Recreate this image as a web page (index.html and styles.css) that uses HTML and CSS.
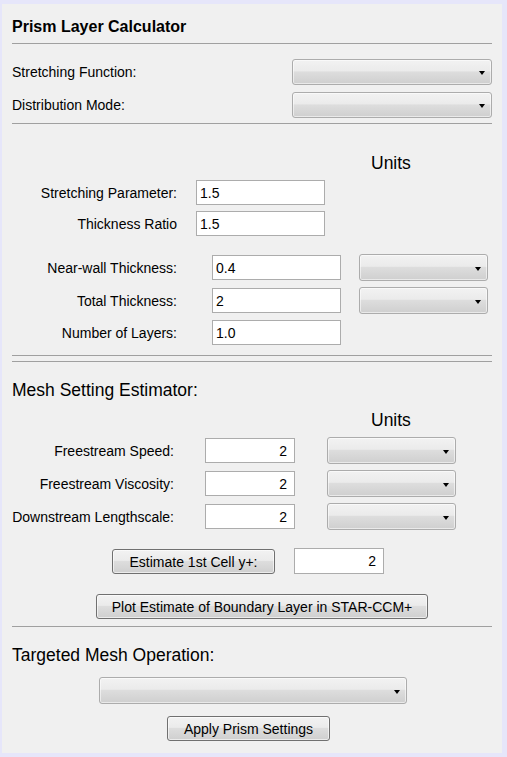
FILE: index.html
```html
<!DOCTYPE html>
<html>
<head>
<meta charset="utf-8">
<link rel="stylesheet" href="styles.css">
</head>
<body>
<div class="panel">
  <div class="title">Prism Layer Calculator</div>
  <div class="rule r-title"></div>

  <div class="row row-top first">
    <span class="label">Stretching Function:</span>
    <div class="combo w200"><span class="arrow"></span></div>
  </div>
  <div class="row row-top second">
    <span class="label">Distribution Mode:</span>
    <div class="combo w200"><span class="arrow"></span></div>
  </div>
  <div class="rule r-dist"></div>

  <div class="units units-a">Units</div>
  <div class="row ra first-a">
    <span class="label lbl165">Stretching Parameter:</span>
    <input class="field w129 ml19" type="text" value="1.5">
  </div>
  <div class="row ra gap6">
    <span class="label lbl165">Thickness Ratio</span>
    <input class="field w129 ml19" type="text" value="1.5">
  </div>

  <div class="row ra group2">
    <span class="label lbl165">Near-wall Thickness:</span>
    <input class="field w129 ml35" type="text" value="0.4">
    <div class="combo w129 ml18"><span class="arrow"></span></div>
  </div>
  <div class="row ra gap6">
    <span class="label lbl165">Total Thickness:</span>
    <input class="field w129 ml35" type="text" value="2">
    <div class="combo w129 ml18"><span class="arrow"></span></div>
  </div>
  <div class="row ra gap6">
    <span class="label lbl165">Number of Layers:</span>
    <input class="field w129 ml35" type="text" value="1.0">
  </div>

  <div class="rule r-dbl1"></div>
  <div class="rule r-dbl2"></div>

  <div class="heading h-mesh">Mesh Setting Estimator:</div>
  <div class="units units-b">Units</div>

  <div class="row ra mesh-first">
    <span class="label lbl162">Freestream Speed:</span>
    <input class="field num w90 ml31" type="text" value="2">
    <div class="combo w129 ml32"><span class="arrow"></span></div>
  </div>
  <div class="row ra gap6">
    <span class="label lbl162">Freestream Viscosity:</span>
    <input class="field num w90 ml31" type="text" value="2">
    <div class="combo w129 ml32"><span class="arrow"></span></div>
  </div>
  <div class="row ra gap6">
    <span class="label lbl162">Downstream Lengthscale:</span>
    <input class="field num w90 ml31" type="text" value="2">
    <div class="combo w129 ml32"><span class="arrow"></span></div>
  </div>

  <div class="row rb est-row">
    <button class="btn w163 ml100" type="button">Estimate 1st Cell y+:</button>
    <input class="field num tall w90 ml19" type="text" value="2">
  </div>
  <div class="row plot-row">
    <button class="btn w332 ml84" type="button">Plot Estimate of Boundary Layer in STAR-CCM+</button>
  </div>
  <div class="rule r-plot"></div>

  <div class="heading h-target">Targeted Mesh Operation:</div>
  <div class="row target-row">
    <div class="combo w308 ml87"><span class="arrow"></span></div>
  </div>
  <div class="row apply-row">
    <button class="btn w163 ml155" type="button">Apply Prism Settings</button>
  </div>
</div>
</body>
</html>
```

FILE: styles.css
```css
* { box-sizing: border-box; }

html, body {
  margin: 0;
  padding: 0;
  background: #e6e6fa;
}

body {
  width: 507px;
  height: 757px;
  overflow: hidden;
  padding-top: 4px;
  padding-left: 2px;
  font-family: "Liberation Sans", Arial, sans-serif;
  color: #000;
}

.panel {
  width: 500px;
  height: 749px;
  background: #f0f0f0;
  padding: 14px 10px 0 10px;
}

.title {
  font-weight: bold;
  font-size: 16px;
  line-height: 18px;
  height: 18px;
}

.rule {
  height: 1px;
  background: #a0a0a0;
  width: 480px;
}
.r-title { margin-top: 7px; }
.r-dist { margin-top: 5px; }
.r-dbl1 { margin-top: 10px; }
.r-dbl2 { margin-top: 5px; }
.r-plot { margin-top: 7px; }

.row {
  display: flex;
  align-items: center;
}
.row-top { justify-content: space-between; height: 26px; }
.first { margin-top: 15px; }
.second { margin-top: 7px; }
.ra { }
.rb { align-items: flex-end; }

.label {
  font-size: 14px;
  line-height: 16px;
  white-space: nowrap;
}
.lbl165 { width: 165px; text-align: right; }
.lbl162 { width: 162px; text-align: right; }

.units {
  font-size: 17.5px;
  line-height: 20px;
  height: 20px;
  padding-left: 359px;
}
.units-a { margin-top: 29px; }
.units-b { margin-top: 10px; }

.heading {
  font-size: 17.5px;
  line-height: 20px;
  height: 20px;
  white-space: nowrap;
}
.h-mesh { margin-top: 18px; }
.h-target { margin-top: 18px; }

.first-a { margin-top: 7px; }
.gap6 { margin-top: 6px; }
.group2 { margin-top: 18px; }
.mesh-first { margin-top: 7px; }
.est-row { margin-top: 18px; }
.plot-row { margin-top: 20px; }
.target-row { margin-top: 12px; }
.apply-row { margin-top: 12px; }

.field {
  height: 25px;
  border: 1px solid #acacac;
  background: #fff;
  font-family: "Liberation Sans", Arial, sans-serif;
  font-size: 14px;
  color: #000;
  padding: 0 3px 0 3px;
  margin-top: 0;
  margin-bottom: 0;
  outline: none;
}
.field.num { text-align: right; padding-right: 7px; }
.field.tall { height: 26px; }

.combo {
  position: relative;
  height: 27px;
  border: 1px solid #acacac;
  border-radius: 3px;
  background: linear-gradient(to bottom, #f2f2f2 0%, #ebebeb 45%, #dddddd 50%, #cfcfcf 100%);
  box-shadow: inset 0 0 0 1px rgba(255,255,255,0.55);
}
.row-top .combo { height: 26px; }
.arrow {
  position: absolute;
  right: 6px;
  top: 50%;
  margin-top: -1px;
  width: 0;
  height: 0;
  border-left: 3.5px solid transparent;
  border-right: 3.5px solid transparent;
  border-top: 4px solid #000;
}

.btn {
  height: 25px;
  border: 1px solid #707070;
  border-radius: 3px;
  background: linear-gradient(to bottom, #f2f2f2 0%, #ebebeb 45%, #dddddd 50%, #cfcfcf 100%);
  box-shadow: inset 0 0 0 1px rgba(255,255,255,0.6);
  font-family: "Liberation Sans", Arial, sans-serif;
  font-size: 14px;
  color: #000;
  padding: 0;
  margin: 0;
  white-space: nowrap;
}

.w200 { width: 200px; }
.w129 { width: 129px; }
.w90 { width: 90px; }
.w163 { width: 163px; }
.w332 { width: 332px; }
.w308 { width: 308px; }

.ml19 { margin-left: 19px; }
.ml35 { margin-left: 35px; }
.ml18 { margin-left: 18px; }
.ml31 { margin-left: 31px; }
.ml32 { margin-left: 32px; }
.ml100 { margin-left: 100px; }
.ml84 { margin-left: 84px; }
.ml87 { margin-left: 87px; }
.ml155 { margin-left: 155px; }
```
